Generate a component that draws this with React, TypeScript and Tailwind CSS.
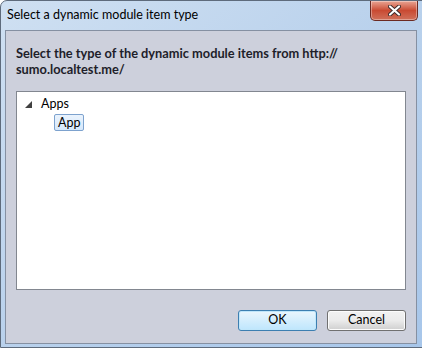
const font = "font-['Lato','Segoe_UI','Open_Sans',sans-serif]";

function CloseButton() {
  return (
    <div className="absolute right-[11px] top-0 flex h-[20px] w-[48px] items-center justify-center rounded-b-[5px] border border-t-0 border-[#6b2a22] bg-gradient-to-b from-[#e8a493] via-[#c94a32] to-[#d0705a] shadow-[inset_0_0_0_1px_rgba(255,255,255,0.35)]">
      <svg width="13" height="11" viewBox="0 0 13 11">
        <path
          d="M2 1.5 L11 9.5 M11 1.5 L2 9.5"
          stroke="#3b2a2a"
          strokeWidth="4"
          strokeLinecap="round"
        />
        <path
          d="M2 1.5 L11 9.5 M11 1.5 L2 9.5"
          stroke="#ffffff"
          strokeWidth="2.2"
          strokeLinecap="round"
        />
      </svg>
    </div>
  );
}

function Button({ label, active }: { label: string; active?: boolean }) {
  return (
    <button
      className={`h-[21px] w-[79px] rounded-[3px] border text-[12.5px] text-black ${
        active
          ? "border-[#3c7fb1] bg-gradient-to-b from-[#eaf6fd] to-[#bee6fd] shadow-[inset_0_0_0_1px_#c0e6fa]"
          : "border-[#707070] bg-gradient-to-b from-[#f2f2f2] via-[#ebebeb] to-[#cfcfcf] shadow-[inset_0_0_0_1px_#fcfcfc]"
      }`}
    >
      {label}
    </button>
  );
}

export default function App() {
  return (
    <div className={`h-[350px] w-[422px] overflow-hidden bg-white ${font}`}>
      <div className="relative h-[348px] w-[430px] rounded-t-[7px] border border-[#5e6b7c] bg-gradient-to-br from-[#cfe0f2] via-[#b9d1ec] to-[#a7c6ea] px-[4px] pb-[4px]">
        <div className="flex h-[29px] items-center pl-[2px] text-[12.5px] text-black">
          Select a dynamic module item type
        </div>
        <CloseButton />
        <div className="flex h-[314px] w-[412px] flex-col border border-[#8590a2] bg-[#cdd0dc] px-[10px]">
          <p className="mt-[14px] text-[12.8px] font-bold leading-[16px] text-[#1e1e2a]">
            Select the type of the dynamic module items from http://
            <br />
            sumo.localtest.me/
          </p>
          <div className="mt-[14px] h-[199px] w-[390px] border border-[#828790] bg-white pl-[8px] pt-[3px] text-[12.5px] text-black">
            <div className="flex h-[18px] items-center">
              <svg width="7" height="7" viewBox="0 0 7 7" className="mr-[9px]">
                <path d="M7 0 L7 7 L0 7 Z" fill="#404040" />
              </svg>
              <span>Apps</span>
            </div>
            <div className="flex h-[18px] items-center pl-[29px]">
              <span className="rounded-[2px] border border-[#7da2ce] bg-gradient-to-b from-[#eaf3fd] to-[#d6e8fb] px-[3px] leading-[15px]">
                App
              </span>
            </div>
          </div>
          <div className="mt-[20px] flex justify-end gap-[10px] pr-0">
            <Button label="OK" active />
            <Button label="Cancel" />
          </div>
        </div>
      </div>
    </div>
  );
}
